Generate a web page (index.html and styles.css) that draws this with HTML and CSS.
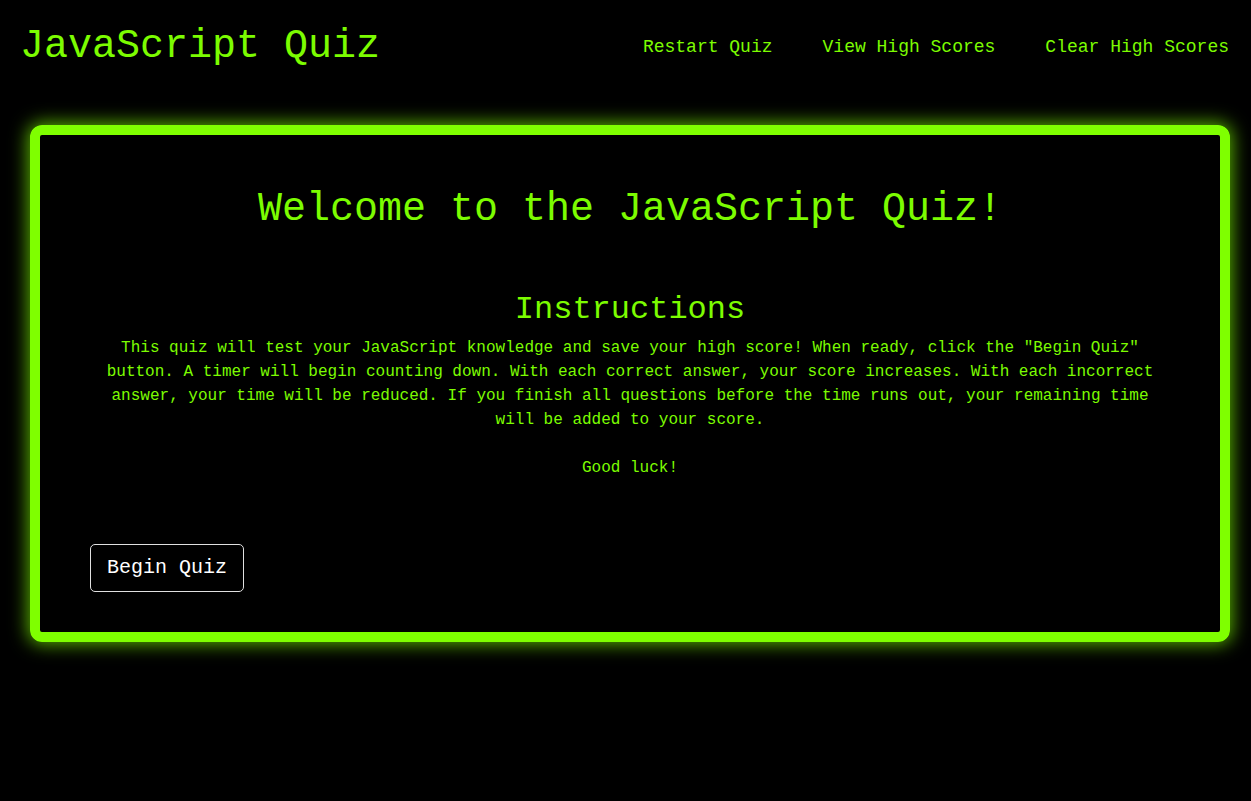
FILE: index.html
```html
<!DOCTYPE html>
<html lang="en">
<head>
<meta charset="utf-8">
<title>JavaScript Quiz</title>
<link rel="stylesheet" href="styles.css">
</head>
<body>
<header class="site-header">
  <h1 class="site-title">JavaScript Quiz</h1>
  <nav class="site-nav">
    <a class="nav-link" href="#">Restart Quiz</a>
    <a class="nav-link" href="#">View High Scores</a>
    <a class="nav-link" href="#">Clear High Scores</a>
  </nav>
</header>
<main class="card">
  <h2 class="welcome">Welcome to the JavaScript Quiz!</h2>
  <h3 class="instructions-title">Instructions</h3>
  <p class="instructions">This quiz will test your JavaScript knowledge and save your high score! When ready, click the "Begin Quiz" button. A timer will begin counting down. With each correct answer, your score increases. With each incorrect answer, your time will be reduced. If you finish all questions before the time runs out, your remaining time will be added to your score.<br><br>Good luck!</p>
  <button class="begin-btn" type="button">Begin Quiz</button>
</main>
</body>
</html>
```

FILE: styles.css
```css
* {
  box-sizing: border-box;
}

html, body {
  margin: 0;
  padding: 0;
  background: #000;
}

body {
  font-family: "Liberation Mono", "Courier New", monospace;
  color: #7cfc00;
  min-height: 801px;
}

.site-header {
  display: flex;
  justify-content: space-between;
  align-items: center;
  padding: 24px 22px 0 20px;
}

.site-title {
  margin: 0;
  font-size: 40px;
  font-weight: normal;
  line-height: normal;
}

.site-nav {
  display: flex;
  gap: 50px;
}

.nav-link {
  color: #7cfc00;
  text-decoration: none;
  font-size: 18px;
}

.card {
  margin: 56px 21px 0 30px;
  border: 10px solid #7fff00;
  border-radius: 12px;
  box-shadow: 0 0 18px 2px rgba(127, 255, 0, 0.7);
  padding: 52px 50px 40px 50px;
  display: flex;
  flex-direction: column;
  align-items: stretch;
}

.welcome {
  margin: 0;
  font-size: 40px;
  font-weight: normal;
  line-height: normal;
  text-align: center;
}

.instructions-title {
  margin: 59px 0 0 0;
  font-size: 32px;
  font-weight: normal;
  line-height: normal;
  text-align: center;
}

.instructions {
  margin: 8px 0 0 0;
  font-size: 16px;
  line-height: 24px;
  text-align: center;
}

.begin-btn {
  align-self: flex-start;
  margin-top: 64px;
  background: #000;
  color: #fff;
  border: 1px solid #e0e0e0;
  border-radius: 5px;
  font-family: "Liberation Mono", "Courier New", monospace;
  font-size: 20px;
  line-height: 22px;
  padding: 12px 16px;
  cursor: pointer;
}
```
